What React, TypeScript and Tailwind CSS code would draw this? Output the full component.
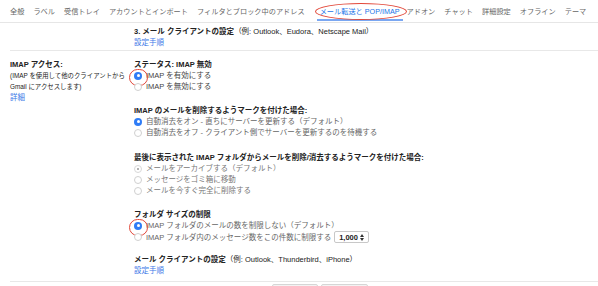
import React from "react";

const tabs = [
  "全般",
  "ラベル",
  "受信トレイ",
  "アカウントとインポート",
  "フィルタとブロック中のアドレス",
  "メール転送と POP/IMAP",
  "アドオン",
  "チャット",
  "詳細設定",
  "オフライン",
  "テーマ",
];

type RadioState = "on" | "off" | "dim";

function Radio({ state, ring }: { state: RadioState; ring?: boolean }) {
  return (
    <span className="relative mr-[4px] flex h-[8px] w-[8px] shrink-0 items-center justify-center">
      {state === "on" && (
        <span className="flex h-[8px] w-[8px] items-center justify-center rounded-full bg-[#2f7cf6]">
          <span className="h-[3px] w-[3px] rounded-full bg-white" />
        </span>
      )}
      {state === "off" && (
        <span className="h-[8px] w-[8px] rounded-full border border-[#d0d0d0] bg-white" />
      )}
      {state === "dim" && (
        <span className="flex h-[8px] w-[8px] items-center justify-center rounded-full border border-[#d8d8d8] bg-white">
          <span className="h-[2px] w-[2px] rounded-full bg-[#999]" />
        </span>
      )}
      {ring && (
        <span className="absolute left-[-5.5px] top-[-3px] h-[17px] w-[19px] rounded-full border-[1.5px] border-[#e2483a]" />
      )}
    </span>
  );
}

function Option({
  state,
  label,
  ring,
  tone = "text-[#666]",
  children,
}: {
  state: RadioState;
  label: string;
  ring?: boolean;
  tone?: string;
  children?: React.ReactNode;
}) {
  return (
    <div className={`flex items-center whitespace-nowrap ${tone}`}>
      <Radio state={state} ring={ring} />
      <span>{label}</span>
      {children}
    </div>
  );
}

export default function App() {
  return (
    <div
      className="h-[286px] w-[598px] overflow-hidden bg-white text-[7.5px] leading-[11px] text-[#222]"
      style={{ fontFamily: '"Liberation Sans", "Noto Sans CJK JP", sans-serif' }}
    >
      {/* tabs */}
      <div className="flex h-[23px] items-center overflow-hidden whitespace-nowrap border-b border-[#e6e6e6] pl-[10px] text-[7.2px] text-[#666]">
        {tabs.map((t, i) =>
          i === 5 ? (
            <div key={t} className="relative mr-[4px] flex h-full shrink-0 items-center px-[3px]">
              <span className="text-[#1a73e8]">{t}</span>
              <span className="absolute bottom-[1px] left-0 right-0 h-[2px] bg-[#7aa7f2]" />
              <span className="absolute left-[-2px] right-[-4px] top-[3px] h-[17px] rounded-[50%] border-[1.5px] border-[#e2483a]" />
            </div>
          ) : (
            <span key={t} className={`shrink-0 ${i === 4 ? "mr-[12px]" : "mr-[9px]"}`}>
              {t}
            </span>
          )
        )}
      </div>

      {/* section 3 */}
      <div className="ml-[10px] whitespace-nowrap border-b border-[#e8e8e8] pb-[2px] pl-[124px] pt-[3px]">
        <div>
          <span className="font-bold">3. メール クライアントの設定</span>
          <span>（例: Outlook、Eudora、Netscape Mail）</span>
        </div>
        <div className="text-[#3b78e7]">設定手順</div>
      </div>

      {/* IMAP access */}
      <div className="ml-[10px] flex whitespace-nowrap border-b border-[#e8e8e8] pb-[5px] pt-[8px]">
        <div className="w-[124px] shrink-0 text-[6.4px]">
          <div className="text-[7.5px] font-bold">IMAP アクセス:</div>
          <div>(IMAP を使用して他のクライアントから</div>
          <div>Gmail にアクセスします)</div>
          <div className="text-[7.5px] text-[#3b78e7]">詳細</div>
        </div>

        <div className="flex-1">
          <div className="font-bold">ステータス: IMAP 無効</div>
          <Option state="on" label="IMAP を有効にする" ring tone="text-[#444]" />
          <Option state="off" label="IMAP を無効にする" tone="text-[#444]" />

          <div className="mt-[13px] font-bold">IMAP のメールを削除するようマークを付けた場合:</div>
          <Option state="on" label="自動消去をオン - 直ちにサーバーを更新する（デフォルト）" />
          <Option state="off" label="自動消去をオフ - クライアント側でサーバーを更新するのを待機する" />

          <div className="mt-[14px] font-bold">
            最後に表示された IMAP フォルダからメールを削除/消去するようマークを付けた場合:
          </div>
          <Option state="dim" label="メールをアーカイブする（デフォルト）" tone="text-[#777]" />
          <Option state="off" label="メッセージをゴミ箱に移動" tone="text-[#777]" />
          <Option state="off" label="メールを今すぐ完全に削除する" tone="text-[#777]" />

          <div className="mt-[13px] font-bold">フォルダ サイズの制限</div>
          <Option state="on" label="IMAP フォルダのメールの数を制限しない（デフォルト）" ring />
          <Option state="off" label="IMAP フォルダ内のメッセージ数をこの件数に制限する">
            <span className="ml-[3px] flex h-[12px] w-[35px] items-center justify-between rounded-[2px] border border-[#c8c8c8] bg-white px-[4px] font-bold text-[#222]">
              1,000
              <svg width="4" height="7" viewBox="0 0 4 7">
                <path d="M0 3 L2 0 L4 3 Z M0 4 L2 7 L4 4 Z" fill="#333" />
              </svg>
            </span>
          </Option>

          <div className="mt-[11px]">
            <span className="font-bold">メール クライアントの設定</span>
            <span>（例: Outlook、Thunderbird、iPhone）</span>
          </div>
          <div className="text-[#3b78e7]">設定手順</div>
        </div>
      </div>

      {/* buttons */}
      <div className="flex gap-[3px] pl-[272px] pt-[2px]">
        <div className="h-[14px] w-[46px] rounded-[2px] border border-[#d6d6d6] bg-[#f3f3f3]" />
        <div className="h-[14px] w-[47px] rounded-[2px] border border-[#d6d6d6] bg-[#f3f3f3]" />
      </div>
    </div>
  );
}
